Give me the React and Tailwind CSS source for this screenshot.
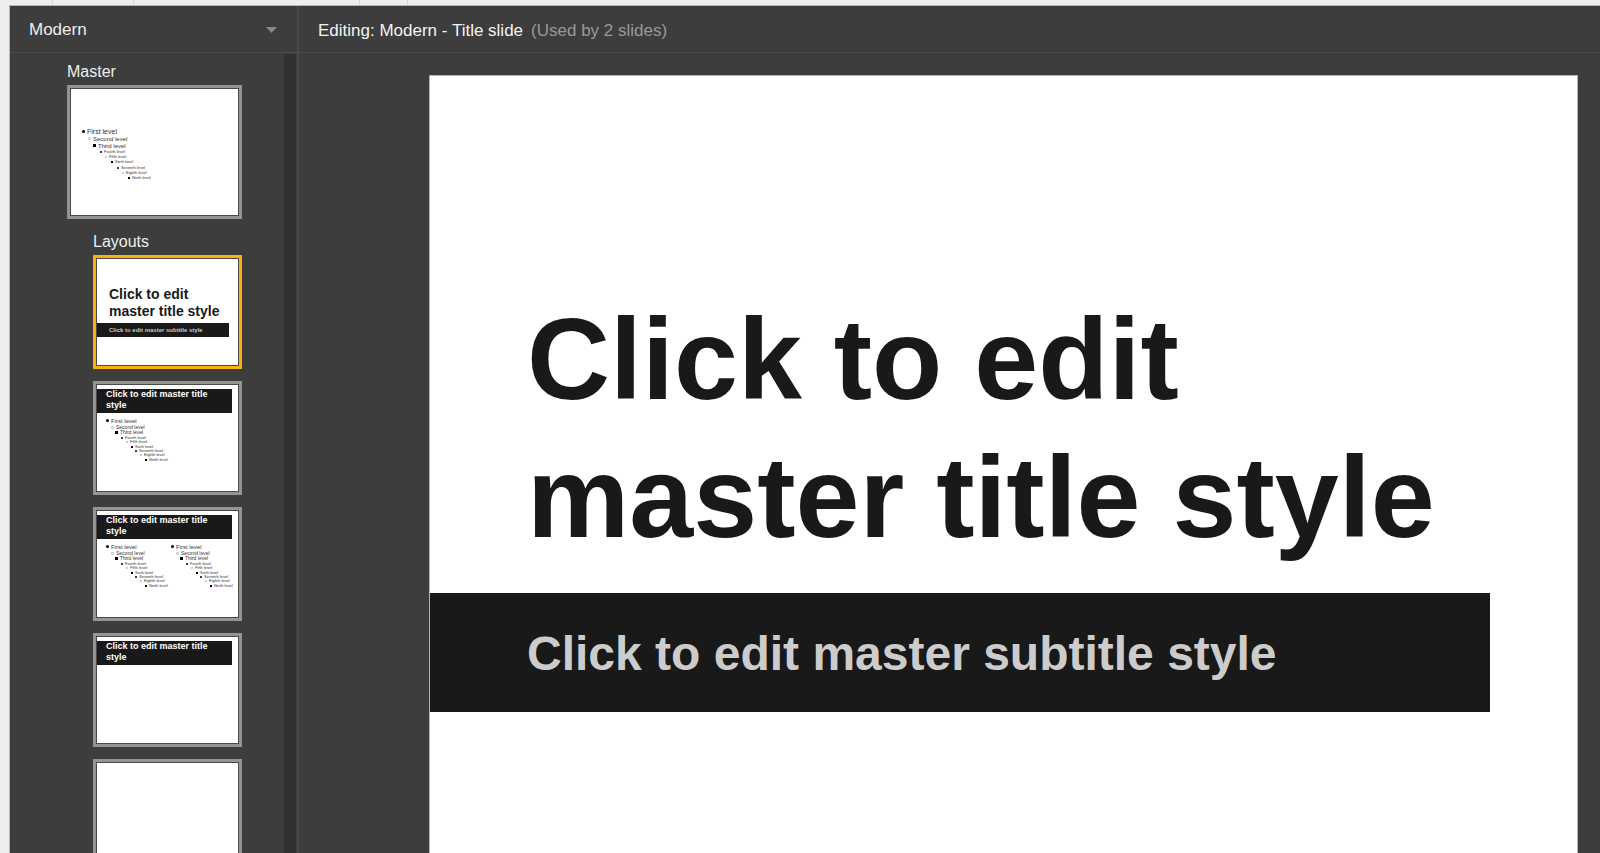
import React, { useState } from "react";

const levels = [
  { text: "First level", bullet: "disc" },
  { text: "Second level", bullet: "circle" },
  { text: "Third level", bullet: "square" },
  { text: "Fourth level", bullet: "disc" },
  { text: "Fifth level", bullet: "circle" },
  { text: "Sixth level", bullet: "square" },
  { text: "Seventh level", bullet: "disc" },
  { text: "Eighth level", bullet: "circle" },
  { text: "Ninth level", bullet: "square" },
];

const bulletStyles = {
  disc: "rounded-full bg-black",
  circle: "rounded-full border border-[#aaaaaa]",
  square: "bg-black",
};

// one row class per level: indent, text size and row height
const masterRows = [
  "pl-0 text-[7px] h-[8px]",
  "pl-[6px] text-[6px] h-[7px]",
  "pl-[11px] text-[6px] h-[7px]",
  "pl-[17px] text-[4px] h-[5px]",
  "pl-[22px] text-[4px] h-[5px]",
  "pl-[28px] text-[4px] h-[6px]",
  "pl-[34px] text-[4px] h-[5px]",
  "pl-[39px] text-[4px] h-[5px]",
  "pl-[45px] text-[4px] h-[5px]",
];

const layoutRows = [
  "pl-0 text-[6px] h-[7px]",
  "pl-[5px] text-[5px] h-[6px]",
  "pl-[9px] text-[5px] h-[5px]",
  "pl-[14px] text-[4px] h-[5px]",
  "pl-[19px] text-[4px] h-[4px]",
  "pl-[24px] text-[4px] h-[5px]",
  "pl-[28px] text-[4px] h-[4px]",
  "pl-[33px] text-[4px] h-[4px]",
  "pl-[38px] text-[4px] h-[5px]",
];

const Outline = ({ rows }) => (
  <div className="text-[#333333]">
    {levels.map((level, i) => (
      <div key={level.text} className={`flex items-center gap-[2px] whitespace-nowrap leading-none ${rows[i]}`}>
        <span className="flex w-[3px] justify-center">
          <span className={`${i < 3 ? "size-[3px]" : "size-[2px]"} ${bulletStyles[level.bullet]}`} />
        </span>
        {level.text}
      </div>
    ))}
  </div>
);

const TitleBar = () => (
  <div className="mr-[6px] h-6 bg-[#191919] pl-[9px] text-[9px] font-bold leading-[11px] text-white">
    Click to edit master title
    <br />
    style
  </div>
);

const TitleSlide = () => (
  <div className="pt-[27px]">
    <div className="pl-[12px] text-[14px] font-bold leading-[17px] text-[#191919]">
      Click to edit
      <br />
      master title style
    </div>
    <div className="mr-[9px] mt-[3px] flex h-[14px] items-center bg-[#191919] pl-[12px] text-[6px] font-bold leading-none text-[#c8c8c8]">
      Click to edit master subtitle style
    </div>
  </div>
);

const layouts = [
  { name: "Title slide", content: <TitleSlide /> },
  {
    name: "Title and body",
    content: (
      <div className="pt-1">
        <TitleBar />
        <div className="pl-[9px] pt-[4px]">
          <Outline rows={layoutRows} />
        </div>
      </div>
    ),
  },
  {
    name: "Title and two columns",
    content: (
      <div className="pt-1">
        <TitleBar />
        <div className="flex pl-[9px] pt-[4px]">
          <div className="w-[65px]">
            <Outline rows={layoutRows} />
          </div>
          <Outline rows={layoutRows} />
        </div>
      </div>
    ),
  },
  {
    name: "Title only",
    content: (
      <div className="pt-1">
        <TitleBar />
      </div>
    ),
  },
  { name: "Blank", content: null },
];

const Thumbnail = ({ label, active, onClick, className, children }) => (
  <button
    type="button"
    aria-label={label}
    aria-pressed={active}
    onClick={onClick}
    className={`flex shrink-0 flex-col border-3 text-left ${active ? "border-[#f9b208]" : "border-[#949494]"} ${className}`}
  >
    <div className="w-full flex-1 overflow-hidden border border-[#4a4a4a] bg-white">{children}</div>
  </button>
);

const App = () => {
  const [theme, setTheme] = useState("Modern");
  const [selected, setSelected] = useState("Title slide");

  return (
    <div className="flex h-screen flex-col overflow-hidden bg-[#eeeeee] font-['Liberation_Sans',Arial,sans-serif]">
      {/* bottom edge of the ruler */}
      <div className="flex h-[5px] shrink-0">
        <div className="w-[53px] border-r border-[#d5d5d5]" />
        <div className="w-[81px] border-r border-[#d5d5d5]" />
        <div className="w-[226px] border-r border-[#d5d5d5]" />
        <div className="w-[48px] border-r border-[#d5d5d5]" />
      </div>

      <div className="ml-[9px] flex min-h-0 flex-1 border-l border-t border-[#b4b4b4] bg-[#3d3d3d]">
        <aside className="flex w-[289px] shrink-0 flex-col border-r-2 border-[#4a4a4a]">
          <div className="relative h-[47px] shrink-0 border-b border-[#4a4a4a]">
            <select
              aria-label="Theme"
              value={theme}
              onChange={(e) => setTheme(e.target.value)}
              className="h-full w-full appearance-none bg-transparent pl-[19px] pt-px text-[17px] text-[#eeeeee] outline-none"
            >
              <option>Modern</option>
            </select>
            <svg
              className="pointer-events-none absolute right-5 top-[21px]"
              width="11"
              height="6"
              viewBox="0 0 11 6"
              aria-hidden="true"
            >
              <path d="M0 0h11L5.5 6z" fill="#888888" />
            </svg>
          </div>

          <div className="flex min-h-0 flex-1">
            <div className="flex flex-1 flex-col items-end overflow-hidden pr-[42px] pt-[7px]">
              <h2 className="w-[175px] shrink-0 pb-px text-base leading-6 text-[#eeeeee]">Master</h2>
              <Thumbnail
                label="Master"
                active={selected === "Master"}
                onClick={() => setSelected("Master")}
                className="h-[134px] w-[175px]"
              >
                <div className="pl-[11px] pt-[38px]">
                  <Outline rows={masterRows} />
                </div>
              </Thumbnail>

              <h2 className="mt-[11px] w-[149px] shrink-0 pb-px text-base leading-6 text-[#eeeeee]">Layouts</h2>
              <div className="flex flex-col gap-3">
                {layouts.map((layout) => (
                  <Thumbnail
                    key={layout.name}
                    label={layout.name}
                    active={selected === layout.name}
                    onClick={() => setSelected(layout.name)}
                    className="h-[114px] w-[149px]"
                  >
                    {layout.content}
                  </Thumbnail>
                ))}
              </div>
            </div>
            <div className="mr-px mt-px w-[12px] bg-[#313131]" />
          </div>
        </aside>

        <main className="flex min-w-0 flex-1 flex-col">
          <div className="flex h-[47px] shrink-0 items-center gap-2 border-b border-[#4a4a4a] pl-[19px] pt-[3px] text-[17px]">
            <h1 className="text-[#f3f3f3]">Editing: {theme} - Title slide</h1>
            <span className="text-[#999999]">(Used by 2 slides)</span>
          </div>

          <div className="min-h-0 flex-1 overflow-hidden pl-[130px] pr-[22px] pt-[22px]">
            <div className="aspect-[4/3] border border-[#b4b4b4] bg-white pt-[214px]">
              <div className="pl-[97px] text-[115px] font-bold leading-[138px] text-[#191919]">
                Click to edit
                <br />
                master title style
              </div>
              <div className="mr-[87px] mt-[27px] flex h-[119px] items-center bg-[#191919] pl-[97px] pt-[2px] text-5xl font-bold text-[#cccccc]">
                Click to edit master subtitle style
              </div>
            </div>
          </div>
        </main>
      </div>
    </div>
  );
};

export default App;
